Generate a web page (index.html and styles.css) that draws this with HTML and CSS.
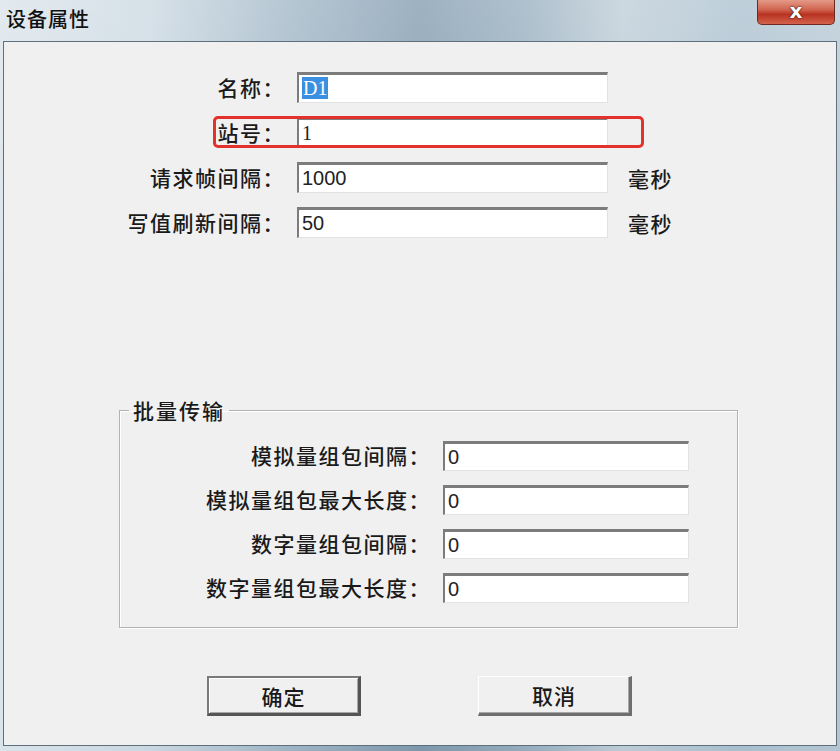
FILE: index.html
```html
<!DOCTYPE html>
<html lang="zh-CN">
<head>
    <meta charset="UTF-8">
    <title>设备属性</title>
    <link rel="stylesheet" href="styles.css">
</head>
<body>

    <div class="window">
        <div class="titlebar">
            <span class="title">设备属性</span>
            <span class="close">x</span>
        </div>

        <div class="client">
            <div class="form">
                <div class="row">
                    <label>名称：</label>
                    <div class="field serif"><span class="sel">D1</span></div>
                </div>
                <div class="row marked">
                    <label>站号：</label>
                    <div class="field serif">1</div>
                </div>
                <div class="row">
                    <label>请求帧间隔：</label>
                    <div class="field">1000</div>
                    <span class="unit">毫秒</span>
                </div>
                <div class="row">
                    <label>写值刷新间隔：</label>
                    <div class="field">50</div>
                    <span class="unit">毫秒</span>
                </div>
            </div>

            <fieldset class="group">
                <legend>批量传输</legend>
                <div class="group-rows">
                    <div class="row">
                        <label>模拟量组包间隔：</label>
                        <div class="field">0</div>
                    </div>
                    <div class="row">
                        <label>模拟量组包最大长度：</label>
                        <div class="field">0</div>
                    </div>
                    <div class="row">
                        <label>数字量组包间隔：</label>
                        <div class="field">0</div>
                    </div>
                    <div class="row">
                        <label>数字量组包最大长度：</label>
                        <div class="field">0</div>
                    </div>
                </div>
            </fieldset>

            <div class="actions">
                <button class="btn default">确定</button>
                <button class="btn">取消</button>
            </div>
        </div>
    </div>

</body>
</html>
```

FILE: styles.css
```css
body {
    margin: 0;
    font-family: "Noto Sans CJK SC", "Liberation Sans", sans-serif;
    color: #1a1a1a;
}
.window {
    width: 840px;
    height: 751px;
    box-sizing: border-box;
    padding: 0 3px 5px 3px;
    display: flex;
    flex-direction: column;
    background:
        linear-gradient(180deg, rgba(255,255,255,0.25) 0%, rgba(255,255,255,0) 55%),
        linear-gradient(90deg, #d9e3ea 0%, #c9d7e1 18%, #9fb5c5 34%, #7d98ac 50%, #93abbc 62%, #bccbd6 74%, #a9bfce 88%, #b4c6d3 100%);
}
.titlebar {
    height: 41px;
    display: flex;
    align-items: flex-start;
}
.title {
    font-size: 20px;
    font-weight: 500;
    line-height: 38px;
    padding-left: 3px;
    letter-spacing: 1px;
    color: #111;
}
.close {
    margin-left: auto;
    margin-right: 2px;
    width: 78px;
    height: 25px;
    box-sizing: border-box;
    border: 1px solid #6e2a22;
    border-top: none;
    border-radius: 0 0 5px 5px;
    background: linear-gradient(180deg, #e39a88 0%, #d06450 40%, #b83322 60%, #d4624c 100%);
    color: #fff;
    font-family: "DejaVu Sans", sans-serif;
    font-weight: bold;
    font-size: 20px;
    line-height: 22px;
    text-align: center;
    text-shadow: 0 0 2px #3a1410, 0 0 1px #3a1410;
}
.client {
    flex: 1;
    background: #f0f0f0;
    border: 1px solid #5f707c;
}
.form {
    padding-top: 30px;
    display: flex;
    flex-direction: column;
    gap: 14px;
}
.row {
    display: grid;
    grid-template-columns: 293px 311px auto;
    align-items: center;
    height: 31px;
}
label {
    text-align: right;
    padding-right: 12px;
    font-size: 21px;
    font-weight: 500;
    letter-spacing: 1.5px;
    line-height: 31px;
    white-space: nowrap;
}
.field {
    height: 31px;
    box-sizing: border-box;
    background: #fff;
    border-top: 3px solid #7c7c7c;
    border-left: 2px solid #7c7c7c;
    border-right: 1px solid #e2e2e2;
    border-bottom: 1px solid #e2e2e2;
    padding-left: 3px;
    font-family: "Liberation Sans", sans-serif;
    font-size: 20px;
    line-height: 26px;
    color: #222;
}
.field.serif {
    font-family: "Liberation Serif", serif;
}
.sel {
    background: #3b8fe3;
    color: #fff;
    padding: 0 1px;
}
.unit {
    margin-left: 20px;
    font-size: 21px;
    font-weight: 500;
    letter-spacing: 1.5px;
}
.marked {
    position: relative;
}
.marked::after {
    content: "";
    position: absolute;
    left: 209px;
    top: -1px;
    width: 431px;
    height: 32px;
    box-sizing: border-box;
    border: 3px solid #e3312c;
    border-radius: 5px;
}
.group {
    margin: 160px 0 0 115px;
    padding: 0 0 25px 0;
    width: 619px;
    box-sizing: border-box;
    border: 1px solid #b3b3b3;
    box-shadow: inset 1px 1px 0 #fff, 1px 1px 0 #fff;
}
.group legend {
    margin-left: 9px;
    padding: 0 4px;
    font-size: 21px;
    font-weight: 500;
    letter-spacing: 2px;
    line-height: 24px;
}
.group-rows {
    padding-top: 18px;
    display: flex;
    flex-direction: column;
    gap: 14px;
}
.group .row {
    grid-template-columns: 323px 246px;
    height: 30px;
}
.group .field {
    height: 30px;
}
.actions {
    margin-top: 48px;
    padding-left: 203px;
    display: flex;
    gap: 117px;
}
.btn {
    width: 154px;
    height: 40px;
    box-sizing: border-box;
    background: #f0f0f0;
    font-family: "Noto Sans CJK SC", sans-serif;
    font-size: 21px;
    font-weight: 500;
    letter-spacing: 1px;
    color: #1a1a1a;
    border-style: solid;
    border-width: 1px 3px 3px 1px;
    border-color: #ffffff #6e6e6e #6e6e6e #ffffff;
    box-shadow: inset -1px -1px 0 #a8a8a8;
    padding: 0;
}
.btn.default {
    border-width: 2px 3px 3px 2px;
    border-color: #7a7a7a #555 #555 #7a7a7a;
    box-shadow: inset 1px 1px 0 #fff, inset -1px -1px 0 #a8a8a8;
}
```
